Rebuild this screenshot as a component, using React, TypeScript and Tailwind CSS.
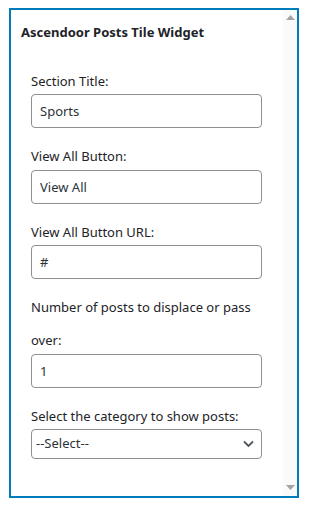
const font = { fontFamily: '"Noto Sans", "Open Sans", sans-serif' };

const Field = ({ label, value }: { label: React.ReactNode; value: string }) => (
  <div className="mb-[12px]">
    <label className="block leading-[33px]">{label}</label>
    <input
      type="text"
      defaultValue={value}
      className="-mt-[3.5px] block h-[34px] w-[231px] rounded-[4px] border border-[#8c8f94] bg-white px-2 text-[13px] text-[#2c3338] outline-none"
    />
  </div>
);

export default function App() {
  return (
    <div className="bg-white pl-[9px] pt-[8px] text-[13px] text-[#1d2327]" style={font}>
      <div className="flex h-[490px] w-[290px] border-2 border-[#007cba] bg-white">
        <div className="flex-1 overflow-hidden pl-[10px] pt-[12px]">
          <h3 className="text-[13px] font-bold leading-[20px]">Ascendoor Posts Tile Widget</h3>
          <div className="mt-[22.5px] pl-[10px]">
            <Field label="Section Title:" value="Sports" />
            <Field label="View All Button:" value="View All" />
            <Field label="View All Button URL:" value="#" />
            <Field
              label={
                <>
                  Number of posts to displace or pass
                  <br />
                  over:
                </>
              }
              value="1"
            />
            <div>
              <label className="block leading-[33px]">Select the category to show posts:</label>
              <div className="relative -mt-[3.5px] w-[231px]">
                <select className="block h-[30px] w-full appearance-none rounded-[4px] border border-[#8c8f94] bg-white pl-[4px] pr-6 text-[13px] text-[#2c3338] outline-none">
                  <option>--Select--</option>
                </select>
                <svg
                  className="pointer-events-none absolute right-[8px] top-[11px]"
                  width="11"
                  height="8"
                  viewBox="0 0 11 8"
                  fill="none"
                >
                  <path d="M1 1.5 L5.5 6 L10 1.5" stroke="#50575e" strokeWidth="1.8" />
                </svg>
              </div>
            </div>
          </div>
        </div>
        <div className="flex w-[14px] flex-col justify-between bg-[#fafafa] pb-[6px] pt-[5px]">
          <svg width="14" height="5" viewBox="0 0 14 5">
            <path d="M3 5 L7.5 0 L12 5 Z" fill="#a3a3a3" />
          </svg>
          <svg width="14" height="5" viewBox="0 0 14 5">
            <path d="M3 0 L12 0 L7.5 5 Z" fill="#a3a3a3" />
          </svg>
        </div>
      </div>
    </div>
  );
}
